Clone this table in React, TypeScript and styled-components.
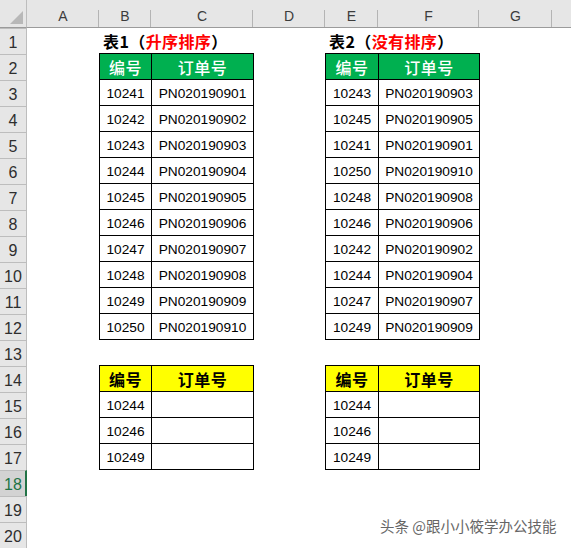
import React from "react";
import styled, { createGlobalStyle, css } from "styled-components";

const GlobalStyle = createGlobalStyle`
  html, body { margin: 0; padding: 0; background: #ffffff; }
  body { font-family: "Liberation Sans", "Noto Sans CJK SC", sans-serif; }
`;

const COLS = ["A", "B", "C", "D", "E", "F", "G", ""];
const ROW_COUNT = 20;
const SELECTED_ROW = 18;

const Sheet = styled.div`
  position: relative;
  width: 571px;
  height: 548px;
  overflow: hidden;
  display: grid;
  grid-template-columns: 27px 72px 52px 102px 72px 53px 101px 73px 1fr;
  grid-template-rows: 28px repeat(${ROW_COUNT}, 26px);
  background: #ffffff;
`;

const Corner = styled.div`
  grid-column: 1;
  grid-row: 1;
  position: relative;
  background: #e6e6e6;
  border-right: 1px solid #bdbdbd;
  border-bottom: 1px solid #9b9b9b;
  box-sizing: border-box;
  &::after {
    content: "";
    position: absolute;
    right: 3px;
    bottom: 3px;
    width: 0;
    height: 0;
    border-left: 13px solid transparent;
    border-bottom: 13px solid #b8b8b8;
  }
`;

const ColHeader = styled.div<{ $last?: boolean }>`
  position: relative;
  background: #e6e6e6;
  border-bottom: 1px solid #9b9b9b;
  box-sizing: border-box;
  display: flex;
  align-items: flex-end;
  justify-content: center;
  padding-bottom: 3px;
  font-family: "Liberation Sans", sans-serif;
  font-size: 14px;
  color: #3c3c3c;
  ${({ $last }) =>
    !$last &&
    css`
      &::after {
        content: "";
        position: absolute;
        right: 0;
        top: 10px;
        bottom: 0;
        width: 1px;
        background: #b4b4b4;
      }
    `}
`;

const RowHeader = styled.div<{ $selected?: boolean }>`
  grid-column: 1;
  background: ${({ $selected }) => ($selected ? "#d3d3d3" : "#e6e6e6")};
  border-top: 1px solid #bdbdbd;
  border-right: ${({ $selected }) => ($selected ? "2px solid #217346" : "1px solid #bdbdbd")};
  box-sizing: border-box;
  display: flex;
  align-items: flex-end;
  justify-content: center;
  padding-bottom: 2px;
  padding-left: ${({ $selected }) => ($selected ? "1px" : "0")};
  font-family: "Liberation Sans", sans-serif;
  font-size: 16px;
  color: ${({ $selected }) => ($selected ? "#217346" : "#2e2e2e")};
`;

const Title = styled.div<{ $col: number; $row: number }>`
  grid-column: ${({ $col }) => $col} / span 3;
  grid-row: ${({ $row }) => $row};
  display: flex;
  align-items: flex-end;
  padding-left: 4px;
  padding-bottom: 4px;
  font-family: "Noto Sans CJK SC", sans-serif;
  font-weight: 700;
  font-size: 16px;
  line-height: 18px;
  letter-spacing: 0.4px;
  color: #000000;
  white-space: nowrap;
`;

const Red = styled.span`
  color: #ff0000;
`;

const Table = styled.div<{ $col: number; $row: number; $rows: number; $wide: number; $narrow: number }>`
  grid-column: ${({ $col }) => $col} / span 2;
  grid-row: ${({ $row }) => $row} / span ${({ $rows }) => $rows};
  align-self: start;
  justify-self: start;
  margin-top: -1px;
  display: grid;
  grid-template-columns: ${({ $narrow, $wide }) => `${$narrow}px ${$wide}px`};
  grid-auto-rows: 26px;
  border-top: 1px solid #000000;
  border-left: 1px solid #000000;
`;

const HeadCell = styled.div<{ $tone: "green" | "yellow" }>`
  box-sizing: border-box;
  border-right: 1px solid #000000;
  border-bottom: 1px solid #000000;
  display: flex;
  align-items: center;
  justify-content: center;
  padding-top: 1px;
  font-family: "Noto Sans CJK SC", sans-serif;
  font-weight: 700;
  font-size: 16px;
  letter-spacing: 0.5px;
  ${({ $tone }) =>
    $tone === "green"
      ? css`
          background: #00b050;
          color: #ffffff;
          font-weight: 500;
        `
      : css`
          background: #ffff00;
          color: #000000;
        `}
`;

const Cell = styled.div`
  box-sizing: border-box;
  border-right: 1px solid #000000;
  border-bottom: 1px solid #000000;
  display: flex;
  align-items: center;
  justify-content: center;
  padding-top: 2px;
  font-family: "Liberation Sans", "Noto Sans CJK SC", sans-serif;
  font-size: 13.7px;
  color: #000000;
`;

const Watermark = styled.div`
  position: absolute;
  left: 380px;
  top: 517px;
  font-family: "Noto Sans CJK SC", sans-serif;
  font-size: 14.5px;
  line-height: 18px;
  color: #666666;
  white-space: nowrap;
  text-shadow: 0 0 1px #ffffff, 0 0 2px #ffffff, 1px 1px 1px rgba(255, 255, 255, 0.9);
`;

type Row = [string, string];

const sorted: Row[] = [
  ["10241", "PN020190901"],
  ["10242", "PN020190902"],
  ["10243", "PN020190903"],
  ["10244", "PN020190904"],
  ["10245", "PN020190905"],
  ["10246", "PN020190906"],
  ["10247", "PN020190907"],
  ["10248", "PN020190908"],
  ["10249", "PN020190909"],
  ["10250", "PN020190910"],
];

const unsorted: Row[] = [
  ["10243", "PN020190903"],
  ["10245", "PN020190905"],
  ["10241", "PN020190901"],
  ["10250", "PN020190910"],
  ["10248", "PN020190908"],
  ["10246", "PN020190906"],
  ["10242", "PN020190902"],
  ["10244", "PN020190904"],
  ["10247", "PN020190907"],
  ["10249", "PN020190909"],
];

const lookup: Row[] = [
  ["10244", ""],
  ["10246", ""],
  ["10249", ""],
];

function DataTable({
  col,
  row,
  rows,
  tone,
  narrow,
  wide,
}: {
  col: number;
  row: number;
  rows: Row[];
  tone: "green" | "yellow";
  narrow: number;
  wide: number;
}) {
  return (
    <Table $col={col} $row={row} $rows={rows.length + 1} $narrow={narrow} $wide={wide}>
      <HeadCell $tone={tone}>编号</HeadCell>
      <HeadCell $tone={tone}>订单号</HeadCell>
      {rows.map(([id, order], i) => (
        <React.Fragment key={i}>
          <Cell>{id}</Cell>
          <Cell>{order}</Cell>
        </React.Fragment>
      ))}
    </Table>
  );
}

export default function App() {
  return (
    <>
      <GlobalStyle />
      <Sheet>
        <Corner />
        {COLS.map((c, i) => (
          <ColHeader key={i} $last={i === COLS.length - 1}>
            {c}
          </ColHeader>
        ))}
        {Array.from({ length: ROW_COUNT }, (_, i) => (
          <RowHeader key={i} style={{ gridRow: i + 2 }} $selected={i + 1 === SELECTED_ROW}>
            {i + 1}
          </RowHeader>
        ))}

        <Title $col={3} $row={2}>
          表1（<Red>升序排序</Red>）
        </Title>
        <Title $col={6} $row={2}>
          表2（<Red>没有排序</Red>）
        </Title>

        <DataTable col={3} row={3} rows={sorted} tone="green" narrow={52} wide={102} />
        <DataTable col={6} row={3} rows={unsorted} tone="green" narrow={53} wide={101} />
        <DataTable col={3} row={15} rows={lookup} tone="yellow" narrow={52} wide={102} />
        <DataTable col={6} row={15} rows={lookup} tone="yellow" narrow={53} wide={101} />

        <Watermark>头条 @跟小小筱学办公技能</Watermark>
      </Sheet>
    </>
  );
}
